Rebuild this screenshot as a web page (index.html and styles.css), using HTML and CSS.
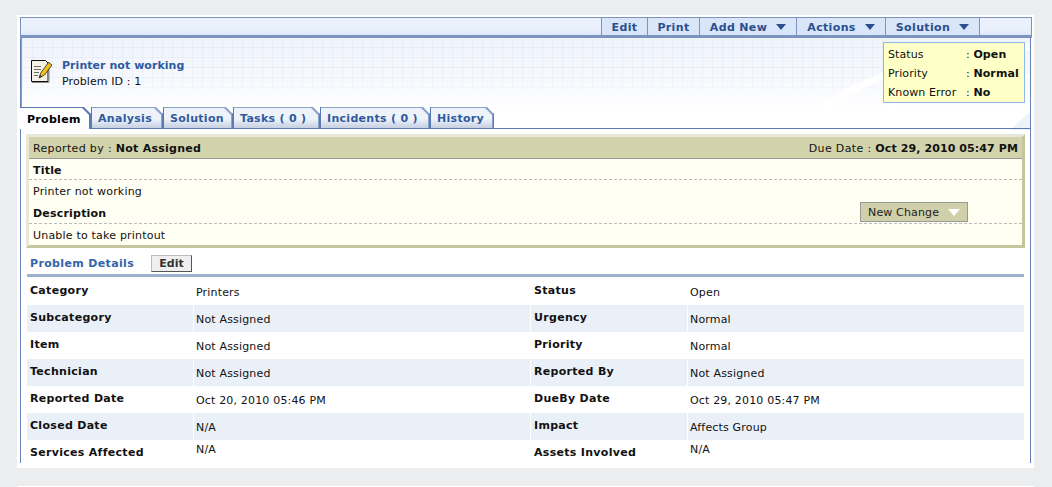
FILE: index.html
```html
<!DOCTYPE html>
<html lang="en">
<head>
<meta charset="utf-8">
<title>Printer not working</title>
<link rel="stylesheet" href="styles.css">
</head>
<body>
<div class="card">
  <div class="frame">
    <nav class="toolbar">
      <a class="tool tool-edit">Edit</a>
      <a class="tool tool-print">Print</a>
      <a class="tool tool-add">Add New<i class="caret"></i></a>
      <a class="tool tool-actions">Actions<i class="caret"></i></a>
      <a class="tool tool-solution">Solution<i class="caret"></i></a>
    </nav>
    <header class="header">
      <svg class="swoosh" viewBox="0 0 260 92" width="260" height="92" aria-hidden="true">
        <path d="M30 92C70 45 150 18 262 8" fill="none" stroke="#fff" stroke-width="7"/>
        <path d="M70 92C120 60 190 50 262 38" fill="none" stroke="#fff" stroke-width="4"/>
        <path d="M240 92L262 72V92Z" fill="#eef2fa"/>
      </svg>
      <div class="head-row">
        <div class="identity">
          <svg class="note-icon" viewBox="0 0 21 23" width="21" height="23" aria-hidden="true">
            <path d="M.5.5H14.500L17 3V21.500H.5Z" fill="#f4f1e6" stroke="#111"/>
            <path d="M1 22.500H18V2" fill="none" stroke="#8a8a84"/>
            <path d="M3 6.500H10M3 9.500H10M3 12.500H8M3 15.500H7" stroke="#6c6c6c" fill="none"/>
            <path d="M8 18L10 12.500L17.500 2.500L21 5L13.500 15Z" fill="#f2bf1d" stroke="#2a2a2a" stroke-width=".8"/>
            <path d="M8 18L9 15L11 16.500Z" fill="#222"/>
          </svg>
          <div class="identity-text">
            <h1 class="title">Printer not working</h1>
            <p class="problem-id">Problem ID : 1</p>
          </div>
        </div>
        <dl class="status-box">
          <dt>Status</dt><dd>: <b>Open</b></dd>
          <dt>Priority</dt><dd>: <b>Normal</b></dd>
          <dt>Known Error</dt><dd>: <b>No</b></dd>
        </dl>
      </div>
      <div class="tabs">
        <a class="tab active tab-problem"><span>Problem</span></a>
        <a class="tab tab-analysis"><span>Analysis</span></a>
        <a class="tab tab-solution"><span>Solution</span></a>
        <a class="tab tab-tasks"><span>Tasks ( 0 )</span></a>
        <a class="tab tab-incidents"><span>Incidents ( 0 )</span></a>
        <a class="tab tab-history"><span>History</span></a>
      </div>
    </header>
    <main class="content">
      <section class="panel">
        <div class="panel-head">
          <span>Reported by : <b>Not Assigned</b></span>
          <span>Due Date : <b class="due">Oct 29, 2010 05:47 PM</b></span>
        </div>
        <div class="panel-row dashed"><b>Title</b></div>
        <div class="panel-row plain">Printer not working</div>
        <div class="panel-row dashed desc">
          <b>Description</b>
          <button class="new-change">New Change<i class="caret-white"></i></button>
        </div>
        <div class="panel-row plain">Unable to take printout</div>
      </section>
      <div class="section-head">
        <h2>Problem Details</h2>
        <button class="edit-btn">Edit</button>
      </div>
      <div class="details">
        <div class="row"><b>Category</b><span>Printers</span><b>Status</b><span>Open</span></div>
        <div class="row alt"><b>Subcategory</b><span>Not Assigned</span><b>Urgency</b><span>Normal</span></div>
        <div class="row"><b>Item</b><span>Not Assigned</span><b>Priority</b><span>Normal</span></div>
        <div class="row alt"><b>Technician</b><span>Not Assigned</span><b>Reported By</b><span>Not Assigned</span></div>
        <div class="row"><b>Reported Date</b><span>Oct 20, 2010 05:46 PM</span><b>DueBy Date</b><span>Oct 29, 2010 05:47 PM</span></div>
        <div class="row alt"><b>Closed Date</b><span>N/A</span><b>Impact</b><span>Affects Group</span></div>
        <div class="row last"><b>Services Affected</b><span>N/A</span><b>Assets Involved</b><span>N/A</span></div>
      </div>
    </main>
  </div>
</div>
<div class="next-card"></div>
</body>
</html>
```
FILE: styles.css
```css
* { box-sizing: border-box; }
html, body { margin: 0; height: 487px; overflow: hidden; }
body {
  background: #ecedef;
  padding: 15px 18px 0 17px;
  font: 11px/14px "DejaVu Sans", Verdana, sans-serif;
  color: #111;
}
b { font-weight: 700; }
.card { background: #fff; height: 453px; padding: 2px 3px 0 3px; }
.next-card { background: #fff; height: 1px; margin-top: 18px; }
.frame { height: 446px; border-left: 1px solid #6682b8; border-right: 1px solid #6682b8; }

.toolbar {
  display: flex; justify-content: flex-end; height: 21px; padding: 0 51px 0 0;
  margin: 0 -2px 0 -1px;
  background: linear-gradient(#eaf1fd 70%, #dde7f8);
  border: 1px solid #7b93bd; border-bottom: 3px solid #7b93bd;
}
.tool {
  display: flex; align-items: center; justify-content: center; gap: 9px; padding-top: 2px;
  color: #2b4f8e; font-weight: 700; letter-spacing: .35px;
  background: #d9e6f9; border-left: 1px solid #7b93bd;
}
.tool:last-child { border-right: 1px solid #7b93bd; }
.tool-edit { width: 46px; }
.tool-print { width: 52px; }
.tool-add { width: 97px; }
.tool-actions { width: 89px; }
.tool-solution { width: 95px; }
.caret { width: 0; height: 0; margin-top: -2px; border: 5px solid transparent; border-top: 6px solid #2b4f8e; border-bottom: 0; }

.header {
  position: relative; height: 91px;
  display: flex; flex-direction: column; justify-content: space-between;
  background: linear-gradient(#f0f4fb, #f7f9fd 45%, #fff 80%);
  border-left: 1px solid #8aa0c6;
}
.header::before {
  content: ""; position: absolute; left: 0; top: 0; width: 900px; height: 60px;
  background:
    repeating-linear-gradient(90deg, rgba(215,226,242,.4) 0 1px, transparent 1px 10px),
    repeating-linear-gradient(0deg, rgba(215,226,242,.4) 0 1px, transparent 1px 10px);
  -webkit-mask-image: linear-gradient(#000 55%, transparent);
  mask-image: linear-gradient(#000 55%, transparent);
}
.swoosh { position: absolute; right: 0; top: 0; }
.head-row {
  position: relative; display: flex; justify-content: space-between; align-items: flex-start;
  padding: 4px 5px 0 9px;
}
.identity { display: flex; gap: 10px; align-items: flex-start; }
.note-icon { flex: none; margin-top: 18px; }
.identity-text { margin-top: 15px; }
.title { margin: 0; font-size: 11px; line-height: 17px; font-weight: 700; letter-spacing: .05px; color: #2f5a9e; }
.problem-id { margin: 0; line-height: 15px; letter-spacing: .1px; }

.status-box {
  display: grid; grid-template-columns: 78px 1fr; grid-auto-rows: 19px; align-items: center;
  width: 142px; height: 61px; margin: 0; padding: 2px 4px 0;
  background: #ffffc8; border: 1px solid #8db9e6;
}
.status-box dt, .status-box dd { margin: 0; letter-spacing: .1px; }

.tabs {
  position: relative; display: flex; height: 22px;
  border-bottom: 1px solid #5b7ab5; margin-left: -2px;
}
.tab {
  display: block; height: 21px; padding: 1px 1px 0 0;
  background: #8ba2cc; border-left: 1px solid #5b7ab5; border-right: 1px solid #5b7ab5;
  clip-path: polygon(0 0, calc(100% - 7px) 0, 100% 7px, 100% 100%, 0 100%);
}
.tab span {
  display: flex; align-items: center; padding: 2px 0 0 6px; height: 20px;
  font-weight: 700; letter-spacing: .3px; color: #2f5a9e;
  background: linear-gradient(#eef2f9 55%, #c6d0e2);
  clip-path: polygon(0 0, calc(100% - 7px) 0, 100% 7px, 100% 100%, 0 100%);
}
.tab-problem { width: 71px; }
.tab-analysis { width: 72px; }
.tab-solution { width: 70px; }
.tab-tasks { width: 87px; }
.tab-incidents { width: 110px; }
.tab-history { width: 64px; }
.tab.active { height: 22px; background: #5b7ab5; border-left: 0; }
.tab.active span { height: 21px; background: #fff; color: #000; padding-left: 7px; }

.content { padding: 5px 0 0 5px; }
.panel {
  width: 999px;
  border: 3px solid; border-color: #e8e8d9 #c6c69e #c6c69e #e8e8d9;
  background: #fffff3;
}
.panel-head {
  display: flex; justify-content: space-between; align-items: center; height: 22px;
  padding: 2px 4px 0 4px; background: #d2d3ab; border-bottom: 1px solid #999;
  letter-spacing: .35px;
}
.panel-head b { letter-spacing: .25px; }
.panel-head b.due { letter-spacing: .1px; }
.panel-row { display: flex; align-items: center; height: 21px; padding: 0 4px; letter-spacing: .2px; }
.panel-row.dashed { border-bottom: 1px dashed #bbb; padding-top: 3px; }
.panel-row.plain { padding-top: 2px; }
.panel-row.desc { justify-content: space-between; padding: 0 54px 0 4px; height: 23px; }
.desc b { padding-top: 3px; }
.new-change {
  display: flex; align-items: center; justify-content: space-between; align-self: flex-start;
  width: 108px; height: 20px; padding: 0 7px 0 7px; margin-top: 1px;
  font: 11px "DejaVu Sans", Verdana, sans-serif; letter-spacing: .15px; color: #222;
  background: #cfcfa9; border: 1px solid #999;
}
.caret-white { width: 0; height: 0; border: 6px solid transparent; border-top: 7px solid #fff; border-bottom: 0; }

.section-head { display: flex; align-items: center; height: 26px; margin-left: 4px; padding-top: 4px; }
.section-head h2 { margin: 0; padding-top: 2px; width: 121px; font-size: 11px; font-weight: 700; letter-spacing: .35px; color: #3464a8; }
.edit-btn {
  width: 41px; height: 17px; padding: 0; font: 700 11px "DejaVu Sans", Verdana, sans-serif; color: #333;
  background: #efefef; border: 1px solid; border-color: #bbb #555 #555 #bbb;
}
.details { width: 997px; margin-left: 1px; border-top: 3px solid #9db0cc; padding-top: 1px; }
.row { display: grid; grid-template-columns: 166px 336px 156px 336px; column-gap: 1px; height: 27px; }
.row > * { padding: 6px 3px 0; letter-spacing: .3px; }
.row > span { padding: 8px 2px 0; font-size: 11px; letter-spacing: .17px; }
.row.alt > * { background: #e9f0f8; }
.row.last { height: 24px; }
.row.last > b { padding-top: 6px; }
.row.last > span { padding-top: 3px; }
```
